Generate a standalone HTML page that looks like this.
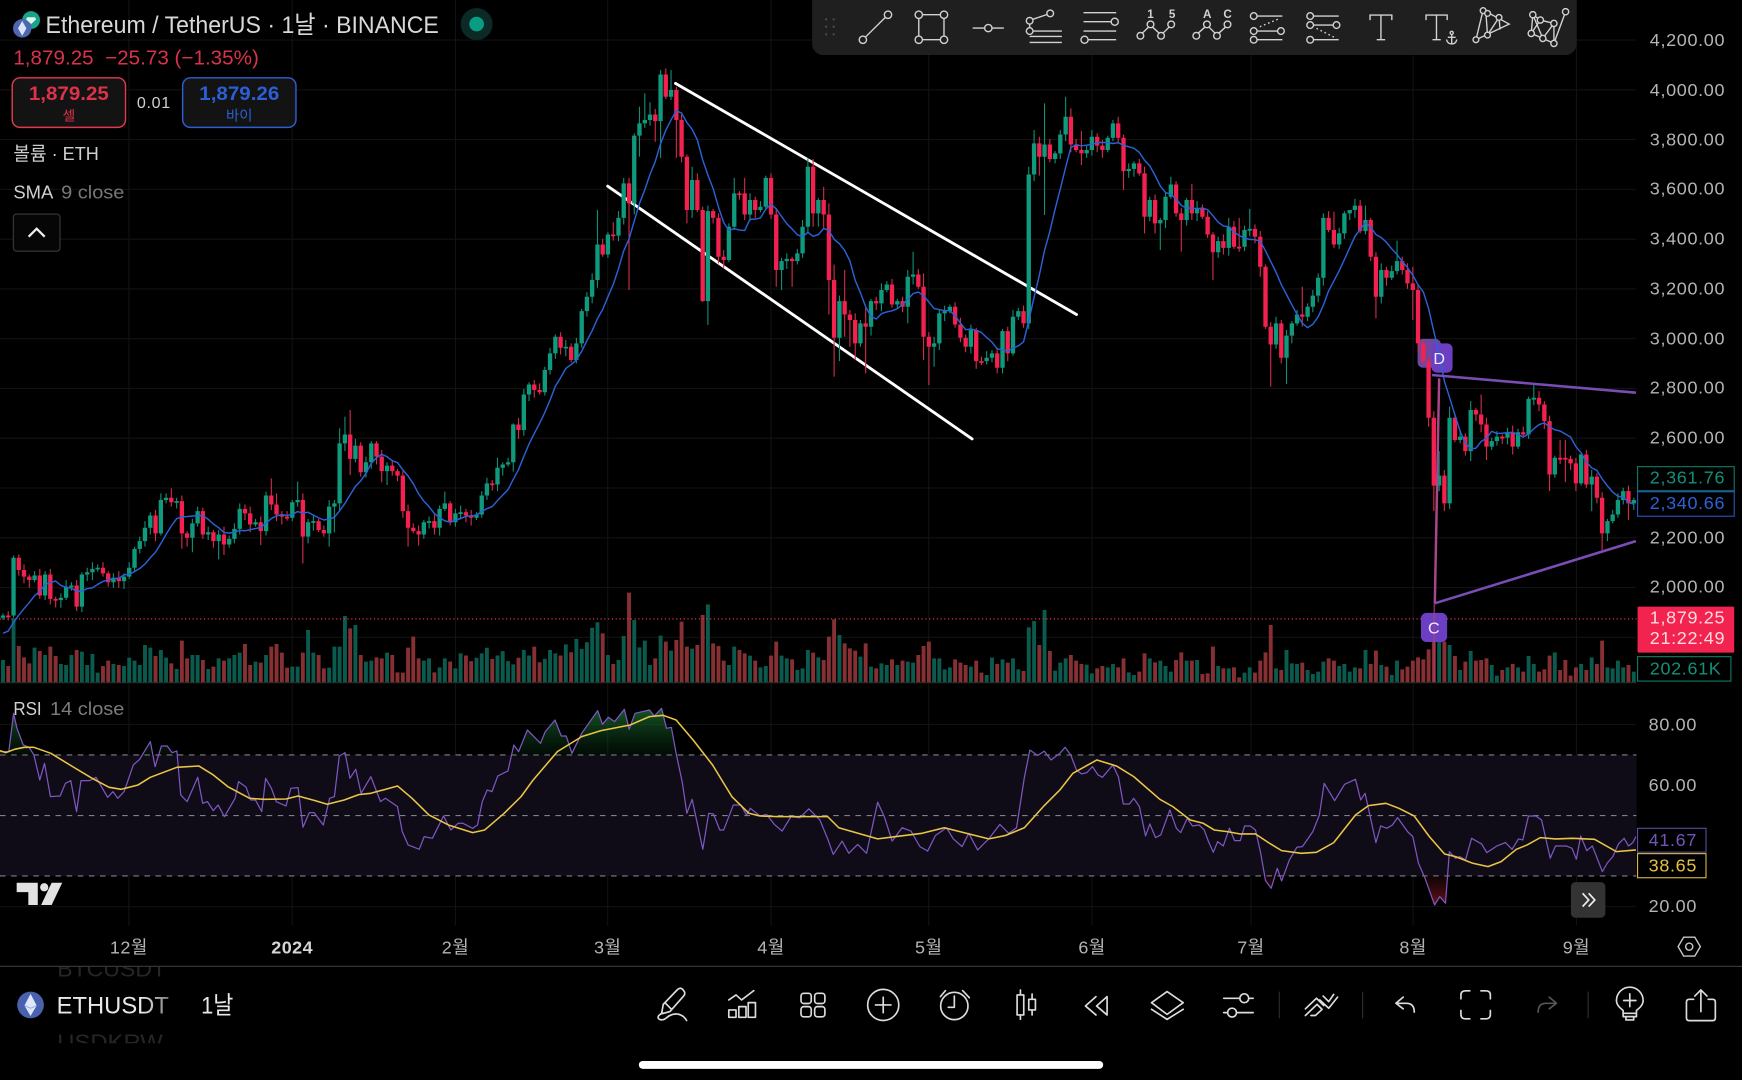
<!DOCTYPE html>
<html lang="ko"><head><meta charset="utf-8"><title>ETHUSDT</title>
<style>
html,body{margin:0;padding:0;background:#000;width:1742px;height:1080px;overflow:hidden}
svg{display:block;font-family:"Liberation Sans","Noto Sans CJK KR",sans-serif}
.ax{font-size:16.2px;fill:#b4b4b4;letter-spacing:.6px}
.xl{font-size:16.2px;fill:#b4b4b4;text-anchor:middle;letter-spacing:.4px}
.i{fill:none;stroke:#d2d2d2;stroke-width:1.25}
.b{fill:none;stroke:#dcdcdc;stroke-width:1.5;stroke-linecap:round;stroke-linejoin:round}
</style></head><body>
<svg xmlns="http://www.w3.org/2000/svg" width="1742" height="1080" viewBox="0 0 1568 972">
<defs>
<linearGradient id="gg" gradientUnits="userSpaceOnUse" x1="0" y1="636" x2="0" y2="680"><stop offset="0" stop-color="#1c7a35" stop-opacity=".75"/><stop offset="1" stop-color="#0b3a17" stop-opacity=".2"/></linearGradient>
<linearGradient id="rg" gradientUnits="userSpaceOnUse" x1="0" y1="788" x2="0" y2="815"><stop offset="0" stop-color="#3a0a10" stop-opacity=".3"/><stop offset="1" stop-color="#8a1a24" stop-opacity=".8"/></linearGradient>
<linearGradient id="ef" gradientUnits="userSpaceOnUse" x1="128" y1="0" x2="153" y2="0"><stop offset="0" stop-color="#e8e8e8"/><stop offset="1" stop-color="#777"/></linearGradient>
<clipPath id="ca"><rect x="0" y="620" width="1473" height="59.5"/></clipPath>
<clipPath id="cb"><rect x="0" y="788.6" width="1473" height="40"/></clipPath>
<clipPath id="cc"><rect x="0" y="870" width="300" height="69"/></clipPath>
</defs>
<rect width="1568" height="972" fill="#000"/>
<g id="grid" stroke="#121212" stroke-width="1"></g>
<rect x="0" y="679.5" width="1473" height="109" fill="#0f0c18"/>
<g id="vol"></g>
<line x1="0" y1="614.4" x2="1473" y2="614.4" stroke="#27302f" stroke-width="1"/>
<line x1="0" y1="557" x2="1473" y2="557" stroke="#f23645" stroke-width="1.1" stroke-dasharray="1 2.4"/>

<!-- channel lines -->
<g stroke="#fff" stroke-width="2.6" stroke-linecap="round">
<line x1="608" y1="75" x2="969" y2="283"/>
<line x1="547" y1="167.5" x2="875" y2="395"/>
</g>
<!-- XABCD boxes -->
<rect x="1276" y="305" width="21" height="26" rx="5" fill="#71469f"/>
<rect x="1288.5" y="309" width="19" height="26.4" rx="5" fill="#6c3fc2"/>
<g id="candles"></g>
<g id="sma"></g>
<g fill="none" stroke="#7a4cb6" stroke-width="2.3">
<line x1="1289" y1="337.5" x2="1472.5" y2="353.4"/>
<line x1="1291.5" y1="543" x2="1472.5" y2="487"/>
</g>
<line x1="1295.4" y1="340.5" x2="1291.5" y2="543" stroke="#a8488a" stroke-width="2.2"/>
<rect x="1279" y="551.6" width="23.6" height="26.2" rx="5" fill="#6b3fc4"/>
<line x1="1291" y1="543" x2="1291" y2="614" stroke="#b2416e" stroke-width="1.4" opacity=".7"/>
<text x="1295.4" y="327.5" font-size="14.5" fill="#f0eaff" text-anchor="middle">D</text>
<text x="1290.6" y="570" font-size="14.5" fill="#f0eaff" text-anchor="middle">C</text>

<!-- RSI -->
<g stroke="#808088" stroke-width="1" stroke-dasharray="5 5">
<line x1="0" y1="679.5" x2="1473" y2="679.5"/><line x1="0" y1="734" x2="1473" y2="734"/><line x1="0" y1="788.4" x2="1473" y2="788.4"/>
</g>
<path id="fa" fill="url(#gg)" clip-path="url(#ca)"/>
<path id="fb" fill="url(#rg)" clip-path="url(#cb)"/>
<path id="rsi" fill="none" stroke="#7e57c2" stroke-width="1.1" stroke-linejoin="round"/>
<path id="ma" fill="none" stroke="#eac545" stroke-width="1.4" stroke-linejoin="round"/>

<!-- header -->
<circle cx="28" cy="18" r="8" fill="#18a38b"/><path d="M24.5 15.5h7l1 2-4.5 4-4.500-4z" fill="#dff5ef"/>
<circle cx="20" cy="25.500" r="8.300" fill="#4f66b0"/><path d="M20 18.800l3.800 6.700-3.800 6.600-3.800-6.600z" fill="#dbe4fb"/>
<text x="41" y="29.500" font-size="22" fill="#d8d8d8" textLength="354" lengthAdjust="spacingAndGlyphs">Ethereum / TetherUS · 1날 · BINANCE</text>
<circle cx="429" cy="21.600" r="14.400" fill="#0b2a25"/><circle cx="429" cy="21.600" r="6.600" fill="#089d82"/>
<text x="12" y="58" font-size="18.500" fill="#d8334a" textLength="221" lengthAdjust="spacingAndGlyphs" xml:space="preserve">1,879.25  −25.73 (−1.35%)</text>
<rect x="11" y="70" width="102" height="44.600" rx="7" fill="#131313" stroke="#df3a4d" stroke-width="1.300"/>
<text x="62" y="90" font-size="17.500" font-weight="bold" fill="#dc3349" text-anchor="middle" textLength="72" lengthAdjust="spacingAndGlyphs">1,879.25</text>
<text x="62" y="108.600" font-size="12.500" fill="#dc3349" text-anchor="middle">셀</text>
<text x="138.500" y="97" font-size="14.500" fill="#cfcfcf" text-anchor="middle" letter-spacing=".6">0.01</text>
<rect x="164.400" y="70" width="102" height="44.600" rx="7" fill="#131313" stroke="#2d5fd0" stroke-width="1.300"/>
<text x="215.400" y="90" font-size="17.500" font-weight="bold" fill="#2b5fd6" text-anchor="middle" textLength="72" lengthAdjust="spacingAndGlyphs">1,879.26</text>
<text x="215.400" y="108.600" font-size="13" fill="#2b5fd6" text-anchor="middle">바이</text>
<text x="12" y="144" font-size="17" fill="#d0d0d0" textLength="77" lengthAdjust="spacingAndGlyphs">볼륨 · ETH</text>
<text x="12" y="178.500" font-size="17" fill="#d0d0d0" textLength="36" lengthAdjust="spacingAndGlyphs">SMA</text>
<text x="55" y="178.500" font-size="17" fill="#787878" textLength="57" lengthAdjust="spacingAndGlyphs">9 close</text>
<rect x="12" y="192.600" width="42" height="33.400" rx="3" fill="#060606" stroke="#3a3a3a" stroke-width="1"/>
<path d="M25.800 213L33 205.800 40.200 213" fill="none" stroke="#eee" stroke-width="2"/>

<!-- top toolbar -->
<rect x="731" y="-10" width="688" height="59.500" rx="10" fill="#1f1f1f"/>
<g fill="#474747"><circle cx="743.600" cy="17.400" r="1.100"/><circle cx="750.400" cy="17.400" r="1.100"/><circle cx="743.600" cy="24" r="1.100"/><circle cx="750.400" cy="24" r="1.100"/><circle cx="743.600" cy="30.900" r="1.100"/><circle cx="750.400" cy="30.900" r="1.100"/></g>
<g class="i">
<circle cx="776.700" cy="35.700" r="3.300"/><circle cx="799.300" cy="13.200" r="3.300"/><path d="M779 33.300L797 15.500"/>
<circle cx="827" cy="13.200" r="3.300"/><circle cx="849.700" cy="13.200" r="3.300"/><circle cx="827" cy="35.700" r="3.300"/><circle cx="849.700" cy="35.700" r="3.300"/><path d="M830.300 13.200H846.400M830.300 35.700H846.400M827 16.500V32.400M849.700 16.500V32.400"/>
<circle cx="889.600" cy="25.200" r="3.300"/><path d="M875.500 25.200H886.300M892.900 25.200H903.600"/>
<circle cx="926.800" cy="18.600" r="3"/><circle cx="945.300" cy="12" r="3"/><circle cx="926.800" cy="27.900" r="3"/><path d="M929.600 17.300L942.500 13M926.800 21.600V24.900M929.800 27.900H955.800M926.800 32.700H955.800M926.800 38.100H955.800"/>
<path d="M975.300 11.400H1004.700M975.300 19.500H1000.100M975.300 27.900H1004.700M979.500 35.700H1004.700"/><circle cx="1003.400" cy="19.500" r="3.200"/><circle cx="976.200" cy="35.700" r="3.200"/>
<circle cx="1026.500" cy="32.100" r="3"/><circle cx="1035.600" cy="21.900" r="3"/><circle cx="1045.100" cy="32.100" r="3"/><circle cx="1054.200" cy="21.900" r="3"/><path d="M1028.300 29.700L1033.800 24.300M1037.400 24.300L1043.300 29.700M1046.900 29.700L1052.400 24.300"/>
<circle cx="1076.800" cy="32.100" r="3"/><circle cx="1086.400" cy="21.900" r="3"/><circle cx="1095.400" cy="32.100" r="3"/><circle cx="1104.900" cy="21.900" r="3"/><path d="M1078.600 29.700L1084.600 24.300M1088.200 24.300L1093.600 29.700M1097.200 29.700L1103.100 24.300"/>
<circle cx="1128.500" cy="14.400" r="3"/><circle cx="1128.500" cy="27.900" r="3"/><circle cx="1128.500" cy="35.700" r="3"/><circle cx="1153" cy="27.900" r="3"/><path d="M1131.500 14.400H1154.300M1131.500 27.900H1150M1131.500 35.700H1154.300"/><path d="M1134 24L1152 16.500" stroke-dasharray="1.500 2.500"/>
<circle cx="1179.300" cy="14.400" r="3"/><circle cx="1179.300" cy="22.500" r="3"/><circle cx="1179.300" cy="35.700" r="3"/><circle cx="1203" cy="22.500" r="3"/><path d="M1182.300 14.400H1205M1182.300 22.500H1200M1182.300 35.700H1205"/><path d="M1185 25.500L1203 34.500" stroke-dasharray="1.500 2.500"/>
<path d="M1233.200 18V13.500H1252.800V18M1243 13.500V35.700M1239.200 35.700H1246.800"/>
<path d="M1283.600 18V13.500H1302.600V18M1293 13.500V35.700M1289.400 35.700H1296.800"/><circle cx="1306.700" cy="29.500" r="1.400"/><path d="M1306.700 31V39.500M1303.200 33.500H1310.200M1302 35.500Q1303 39.500 1306.700 39.500Q1310.500 39.500 1311.300 35.500"/>
<path d="M1328.500 35.700L1335 9L1358.400 21.600ZM1337.500 11.400L1338.900 31.500M1349.300 15.600L1338.900 31.500M1349.300 15.600L1350.200 26.500"/><g fill="#1f1f1f"><circle cx="1328.500" cy="35.700" r="2.600"/><circle cx="1335" cy="9.500" r="2.600"/><circle cx="1339" cy="12" r="2.600"/><circle cx="1349.300" cy="15.600" r="2.600"/><circle cx="1338.900" cy="31.500" r="2.600"/></g>
<path d="M1379.700 13.200L1378.300 30L1388.700 34.500L1398.700 39L1409.200 10.500M1379.700 13.200L1386.500 18L1398.700 21L1388.700 34.500M1386.500 18L1378.300 30M1398.700 21L1398.700 39M1379.700 13.200L1388.700 34.500"/><g fill="#1f1f1f"><circle cx="1379.700" cy="13.200" r="2.800"/><circle cx="1386.500" cy="18" r="2.800"/><circle cx="1398.700" cy="21" r="2.800"/><circle cx="1409.200" cy="10.500" r="2.800"/><circle cx="1378.300" cy="30" r="2.800"/><circle cx="1388.700" cy="34.500" r="2.800"/><circle cx="1398.700" cy="39" r="2.800"/></g>
</g>
<g font-size="10.500" fill="#d2d2d2" text-anchor="middle" font-weight="bold"><text x="1035.600" y="16">1</text><text x="1055" y="16">5</text><text x="1086.600" y="16">A</text><text x="1105" y="16">C</text></g>

<!-- price axis -->
<g class="ax" id="pa">
<text x="1485" y="41.200">4,200.00</text><text x="1485" y="86.200">4,000.00</text><text x="1485" y="130.700">3,800.00</text><text x="1485" y="175.200">3,600.00</text><text x="1485" y="220.200">3,400.00</text><text x="1485" y="265.200">3,200.00</text><text x="1485" y="310.200">3,000.00</text><text x="1485" y="354.200">2,800.00</text><text x="1485" y="399.200">2,600.00</text><text x="1485" y="489.200">2,200.00</text><text x="1485" y="533.200">2,000.00</text>
<text x="1484" y="657.500">80.00</text><text x="1484" y="712">60.00</text><text x="1484" y="821">20.00</text>
</g>
<rect x="1474" y="420" width="87" height="21.700" fill="#000" stroke="#0e7c69" stroke-width="1"/>
<text class="ax" x="1485" y="435.200" style="fill:#12907a">2,361.76</text>
<rect x="1474" y="442.600" width="87" height="22" fill="#000" stroke="#2456c0" stroke-width="1"/>
<text class="ax" x="1485" y="458.200" style="fill:#2a62d8">2,340.66</text>
<rect x="1474" y="546" width="87" height="41.400" rx="1" fill="#f2234f"/>
<text class="ax" x="1485" y="561" style="fill:#ffdbe0">1,879.25</text>
<text class="ax" x="1485" y="579.600" style="fill:#ffdbe0">21:22:49</text>
<rect x="1474" y="591" width="84" height="22" fill="#000" stroke="#0e7c69" stroke-width="1"/>
<text class="ax" x="1485" y="607.200" style="fill:#12907a">202.61K</text>
<rect x="1474" y="745.500" width="61.600" height="21.500" fill="#000" stroke="#5b4a9e" stroke-width="1"/>
<text class="ax" x="1484" y="761.600" style="fill:#6f56b8">41.67</text>
<rect x="1474" y="768.300" width="61.600" height="21.700" fill="#000" stroke="#d9b840" stroke-width="1"/>
<text class="ax" x="1484" y="784.600" style="fill:#e6c340">38.65</text>

<!-- labels in panes -->
<text x="12" y="643.500" font-size="16.500" fill="#d0d0d0" textLength="25.500" lengthAdjust="spacingAndGlyphs">RSI</text>
<text x="45" y="643.500" font-size="16.500" fill="#7c7c7c" textLength="67" lengthAdjust="spacingAndGlyphs">14 close</text>
<!-- TV logo -->
<g fill="#e2e2e2"><path d="M15 794.500H34V814.500H25.500V803H15Z"/><circle cx="39.800" cy="798.600" r="3.700"/><path d="M46.500 794.500H56L46.500 814.500H37Z"/></g>
<!-- scroll btn -->
<rect x="1414" y="794" width="31" height="32" rx="4" fill="#333"/>
<path d="M1424.500 804L1430 810L1424.500 816M1430 804L1435.500 810L1430 816" fill="none" stroke="#f0f0f0" stroke-width="1.500"/>
<!-- time axis -->
<g class="xl">
<text x="116" y="858">12월</text><text x="263" y="858" style="font-weight:bold;fill:#d6d6d6">2024</text><text x="410" y="858">2월</text><text x="547" y="858">3월</text><text x="694" y="858">4월</text><text x="836" y="858">5월</text><text x="983" y="858">6월</text><text x="1126" y="858">7월</text><text x="1272" y="858">8월</text><text x="1419" y="858">9월</text>
</g>
<path d="M1515.500 843.500H1525.500L1530.500 852L1525.500 860.500H1515.500L1510.500 852Z" fill="none" stroke="#c6c6c6" stroke-width="1.300"/><circle cx="1520.500" cy="852" r="3.200" fill="none" stroke="#c6c6c6" stroke-width="1.300"/>
<line x1="0" y1="869.700" x2="1568" y2="869.700" stroke="#3c3c3c" stroke-width="1"/>

<!-- bottom bar -->
<g clip-path="url(#cc)" font-size="20" fill="#262626"><text x="51.500" y="879" textLength="98" lengthAdjust="spacingAndGlyphs">BTCUSDT</text><text x="51.500" y="945" textLength="95" lengthAdjust="spacingAndGlyphs">USDKRW</text></g>
<circle cx="27.500" cy="904.500" r="12" fill="#4a62ae"/><path d="M27.500 894.500L33 905L27.500 914.500L22 905Z" fill="#dfe7fb"/><path d="M22 905L27.500 907.500L33 905" fill="none" stroke="#8fa3e2" stroke-width=".8"/>
<text x="51" y="912.200" font-size="22" fill="url(#ef)" textLength="101" lengthAdjust="spacingAndGlyphs">ETHUSDT</text>
<text x="181" y="912.200" font-size="22" fill="#e8e8e8" textLength="29" lengthAdjust="spacingAndGlyphs">1날</text>

<g class="b">
<path d="M597 904L610 890.500Q612.500 888.500 614.500 890.500L616 892.500Q617 894.500 615.300 896.500L603 910.500L595.500 912.500ZM598.500 902.500L604.500 908.500"/><path d="M618 918.500C614 911.500 606 911 600 916C596 919.500 590.500 917.500 593 914L596 911.500"/>
<path d="M656 909H662.500V915.600H656ZM665 906H671.500V915.600H665ZM673.500 902.400H680V915.600H673.500ZM656 900L662.500 895.500L667.500 900L678.500 891.600"/>
<rect x="721" y="894" width="9.200" height="9.200" rx="2.500"/><rect x="733.300" y="894" width="9.200" height="9.200" rx="2.500"/><rect x="721" y="906" width="9.200" height="9.200" rx="2.500"/><rect x="733.300" y="906" width="9.200" height="9.200" rx="2.500"/>
<circle cx="795" cy="904.500" r="14"/><path d="M795 897.500V911.500M788 904.500H802"/>
<circle cx="859" cy="905.400" r="12.300"/><path d="M846.500 897L851 891.600M866.500 891.600L872.500 898M859 896.500V906.600H853.500"/>
<path d="M915.500 895.500H921.500V913.500H915.500ZM918.500 891V895.500M918.500 913.500V917.400M926 899.400H932V909H926ZM929 894.600V899.400M929 909V913.500"/>
<path d="M986.500 897L977 905.400L986.500 913.500M996.500 897L987 905.400L996.500 913.500Z"/>
<path d="M1050.500 892.500L1065 902.500L1050.500 913L1036.500 902.500ZM1036.500 908.400L1050.500 917.500L1065 908.400"/>
<path d="M1101.500 898.500H1116M1124 898.500H1128M1101.500 911.400H1105M1113 911.400H1128"/><circle cx="1120" cy="898.500" r="4"/><circle cx="1109" cy="911.400" r="4"/>
<path d="M1175 908L1185 898.500L1191.500 905M1175 914L1185.500 904L1190 908.500L1184 914L1180 914M1188 900L1196 907.500L1204 897.500M1191 896.500L1196 901.500L1200.500 895"/>
<path d="M1256.500 903L1263 897.500M1256.500 903L1263 908M1256.500 903H1266Q1273 903 1273 911"/>
<path d="M1315 899V895.600Q1315 891.800 1319 891.800H1323M1333 891.800H1337.500Q1341.500 891.800 1341.500 895.600V899M1341.500 909.500V913Q1341.500 917 1337.500 917H1333M1323 917H1319Q1315 917 1315 913V909.500"/>
<path d="M1401 903L1394.500 897.500M1401 903L1394.500 908M1401 903H1391.500Q1384.500 903 1384.500 911" stroke="#565656"/>
<path d="M1461 912V909.500C1458 907 1455 904.500 1455 900.500A12 12 0 0 1 1479 900.500C1479 904.500 1476 907 1473 909.500V912ZM1461 912H1473V915H1461ZM1463.500 915H1470.500V918H1463.500ZM1467 894.500V906M1461.500 900.500H1472.500"/>
<path d="M1524.500 899.400H1520.500Q1518 899.400 1518 902V916Q1518 918.600 1520.500 918.600H1541.500Q1544 918.600 1544 916V902Q1544 899.400 1541.500 899.400H1537.500M1531 891V910.500M1525.500 896.500L1531 891L1536.500 896.500"/>
</g>
<path d="M1151.500 892.500V916.500M1226.500 892.500V916.500M1429.500 892.500V916.500" stroke="#2e2e2e" stroke-width="1" fill="none"/>
<rect x="575" y="955" width="418" height="7" rx="3.500" fill="#fff"/>
</svg>
<script>
(function(){
var $=function(i){return document.getElementById(i)};
var gr='',y,k,M=[116,263,410,547,694,836,983,1126,1272,1419];
for(k=0;k<13;k++){y=36+44.8*k;gr+='M0 '+y+'H1473';}
M.forEach(function(x){gr+='M'+x+' 0V833'});
[652,706.5,761,816].forEach(function(y){gr+='M0 '+y+'H1473'});
var gp=document.createElementNS('http://www.w3.org/2000/svg','path');gp.setAttribute('d',gr);gp.setAttribute('fill','none');$('grid').appendChild(gp);
var C=[554,554,502,513,519,522,518,536,517,539,540,538,528,527,546,517,515,512,511,516,524,520,523,519,511,
494,487,475,464,480,450,448,452,451,480,484,471,460,481,479,487,481,490,485,476,458,462,472,470,478,446,454,463,465,466,452,450,483,470,469,477,480,456,453,399,391,413,401,425,416,399,411,424,419,424,428,460,475,478,481,470,469,475,458,453,470,462,461,464,466,463,446,435,436,421,418,416,382,387,355,
346,351,353,333,318,303,313,312,324,309,280,267,252,220,229,211,212,196,165,183,122,111,108,103,109,67,87,81,108,141,189,162,189,271,190,196,231,234,204,174,174,193,180,189,186,160,193,243,235,233,235,228,204,150,192,180,193,252,304,271,283,288,309,291,294,271,273,261,256,274,271,276,249,247,258,303,312,309,282,280,276,292,304,312,297,325,325,322,318,331,298,318,285,280,291,157,129,141,130,
143,138,121,105,130,135,138,135,123,131,135,124,111,124,154,152,147,156,195,180,201,198,177,166,192,198,180,192,187,195,211,227,217,223,204,222,222,207,206,213,240,294,310,291,322,302,291,283,285,276,266,250,196,207,220,210,192,189,185,208,198,231,267,243,250,244,235,243,255,261,309,325,376,437,428,453,376,396,393,406,369,373,382,402,397,393,394,389,402,389,391,359,358,364,379,427,412,412,413,417,435,409,436,429,448,480,469,463,450,442,453,450];
var H={2:500,64:385.5,65:375,66:369,57:444,56:433.5,51:430.5,52:444,30:444,32:439.5,37:456,42:474,45:453,50:442.500,92:430,94:412,97:381,98:376,84:442.5,71:397,78:471,
121:96,122:84,123:92,125:63,126:61.5,127:63,113:189,116:200,153:142.5,154:143,156:168,157:183,158:238,160:243,164:277,173:226.5,175:246,195:150,196:117,198:93,202:87,203:97.5,222:159,226:165.6,250:246,253:190.5,258:180,259:185,265:216.6,247:258,273:406,275:366,279:361,281:355,291:346,296:396,297:396,131:150,139:160,141:160,145:158,118:160,
205:118,211:108,233:196,235:196,238:202,237:188,255:190,256:190,268:240};
var L={2:556,34:494,35:492,36:497,41:503.4,42:499.5,49:490.5,57:507,62:492,63:479,66:427.5,72:434,73:436.5,77:492,79:491,97:424.5,98:395,99:392,
119:261,120:193,121:141,124:127.5,125:142,128:142,130:201,133:271.5,134:292.5,147:258,148:261,150:258,154:204,155:204,156:205,157:283,158:339,159:325,160:303,161:312,162:324,164:336,165:302,172:291,175:324,176:346.5,177:330,189:336,190:336,197:158,198:193.5,
205:148.5,213:171,217:210,219:210,220:225,224:226.5,230:252,239:249,241:348,244:345.6,247:294,261:286.5,268:288,271:384,274:460,272:460,275:458,302:460,304:495,309:468,294:442,297:434,279:415,282:414};
var VA=[360,378,235,318,352,370,323,333,345,320,348,372,375,345,330,335,375,342,398,378,362,372,375,378,353,362,375,315,323,348,330,353,370,387,302,355,345,345,360,387,380,355,362,355,345,338,312,375,365,368,345,320,312,338,383,380,380,338,270,338,345,385,383,320,320,228,265,255,345,365,362,352,355,338,345,397,398,323,290,355,362,355,397,382,355,365,385,340];
var VB=[590,595,592,588,583,593,590,586,595,598,592,585,590,582,596,593,585,588,590,580,587,575,584,578,565,560];
var VC=[130,195,222,210,138,8,90,172,152,225,205,137,155,182,150,95,170,176,165,75,43,160,168,212,225,170,180,190,197,212,232,228,197,155,197,205,208,240,235,180,188,202,210,140,88,135,160,175,182,200,160,230,235,220,225,208,225,212,215,218,195,168,155,205,205,238,232,208,218,225,230,212,248,255,203,222,208,218,205,238,243,112,93,165,60,183,242,218,205,195,212,222,224,250,235,228,232,222,232,205,247,255,245,190,205,217,212,228,245,210,187,212,212,210,252,250,170,228,235,235,232,262,248,232,248,212,187,105,235,240,180,220,222,218,240,252,245,215,205,212,228,222,245,232,235,180,222,182,225,230,255,212,238,230,212,202,208,178,100,152,155,165,198,240,215,183,212,210,205,225,257,240,232,222,232,245,198,222,245,238,197,187,240,210,257,232,222,240,202,222,152,232,235,212,232,225,245];
var gw='',gb='',rw='',rb='',gv='',rv='',X=function(i){return 2.7+4.735*i};
function P(g,d,st,w){var p=document.createElementNS('http://www.w3.org/2000/svg','path');p.setAttribute('d',d);p.setAttribute('stroke',st);p.setAttribute('stroke-width',w);p.setAttribute('fill','none');p.setAttribute('stroke-linejoin','round');$(g).appendChild(p);}
for(var i=0;i<C.length;i++){
 var x=X(i).toFixed(1),c=C[i],o=i?C[i-1]:556,t=Math.min(c,o),b=Math.max(c,o),up=c<o;
 if(b-t<1.6){b=t+1.6}
 var hi=H[i]||t-(2+i*7%5),lo=L[i]||b+(2+i*13%6);
 if(hi>t)hi=t;if(lo<b)lo=b;
 var w='M'+x+' '+hi+'V'+lo,bd='M'+x+' '+t+'V'+b;
 if(up){gw+=w;gb+=bd}else{rw+=w;rb+=bd}
 var v=i<88?486+VA[i]*.3:i<114?VB[i-88]:(VC[i-114]!==undefined?531+VC[i-114]*.3:590);
 var vs='M'+x+' 614V'+v.toFixed(1);
 if(up)gv+=vs;else rv+=vs;
}
P('vol',gv,'#0b5a4e',3.5);P('vol',rv,'#863034',3.5);
P('candles',gw,'#0f8f76',1);P('candles',rw,'#d42c4c',1);P('candles',gb,'#0f9a7e',3.9);P('candles',rb,'#f2214f',3.9);
var s='';
for(i=0;i<C.length;i++){var sum=0;for(k=i-8;k<=i;k++)sum+=k<0?572:C[k];s+=(i?'L':'M')+X(i).toFixed(1)+' '+(sum/9).toFixed(1);}
P('sma',s,'#2a62d6',1.3);
function a(z,sx,ox,out){for(var j=0;j<z.length;j+=2)out.push([ox+z[j]*sx,621+z[j+1]*.3]);return out}
var R=[];
a([0,185,18,185,28,70,35,115,48,165,60,172,70,195,82,270,92,220,104,320,124,318,135,280,146,272,158,365,167,272,185,272,198,262,222,322,233,305,243,325,256,305,275,225,288,208,310,155,320,230,333,168,345,168,355,188,365,183,373,315,386,335,408,262,418,340,428,335,440,362,450,345,463,380,485,325,492,275,508,292,517,330,527,330,540,365,548,265,560,295,570,335,590,348,600,295,615,293,625,412,638,368,648,368,667,405,680,325,690,320,700,198,712,188,722,265,734,238,745,310,765,260,785,335,795,325,820,350,830,425,842,465,865,478,875,440,892,445,915,378,930,420,945,400,955,400,975,415,985,405,995,335,1005,300,1015,305,1027,258,1048,243,1060,165,1070,185,1088,120,1115,160,1125,125,1145,90,1158,138,1168,138,1180,190,1200,130,1233,62,1243,103,1255,82,1268,95,1288,58,1298,118,1310,70,1340,60,1350,78,1365,55,1375,115,1385,112,1395,190,1408,280,1417,370,1428,328,1450,478,1462,370,1472,372,1485,420,1493,420,1513,345,1528,345,1540,375,1548,355,1568,378],.4363,0,R);
[[690,733],[697,742],[704,748],[712,735],[720,736],[728,728],[738,738],[745,755],[750,769],[758,757],[764,768],[772,760],[780,768],[790,722],[796,735],[803,757],[812,745],[820,748],[828,762],[835,766],[842,752],[852,745],[858,755],[866,762],[872,750],[880,765],[890,755],[900,742],[908,750],[915,745],[922,700],[927,675],[934,680],[940,676],[946,684]].forEach(function(p){R.push(p)});
a([0,190,12,172,25,195,38,240,50,252,62,248,75,230,88,255,98,262,122,225,135,262,146,342,160,342,170,325,183,350,197,438,207,402,220,443,232,435,253,360,268,415,278,428,293,385,305,408,320,405,332,420,342,455,353,487,363,455,376,468,390,415,402,452,415,452,425,408,438,408,450,420,462,490,473,572,486,595,500,535,510,573,528,510,545,472,558,470,582,425,597,375,608,280,632,332,655,283,680,268,692,330,702,310,727,458,738,408,752,415,765,405,777,383,800,425,812,440,825,520,840,565,862,645,874,620,887,640,896,485,910,505,920,500,933,510,947,445,970,462,982,488,1005,468,1025,458,1040,478,1055,447,1065,450,1078,378,1095,378,1108,390,1128,505,1140,468,1165,468,1178,475,1188,508,1198,438,1212,482,1225,468,1248,545,1260,518,1272,500,1285,462,1298,445,1308,468,1318,458,1325,440],.3913,954,R);
var Y=[];
a([0,182,12,188,30,178,50,172,70,172,105,190,150,230,190,265,225,292,250,298,285,285,310,262,365,232,410,228,440,255,470,290,515,325,545,328,590,327,615,318,650,332,675,343,710,330,740,314,765,310,820,288,850,325,885,375,925,405,975,428,1000,420,1040,370,1075,320,1100,270,1150,185,1200,140,1240,122,1300,105,1340,80,1368,76,1395,90,1430,150,1470,225,1510,320,1545,370,1568,378],.4363,0,Y);
[[700,735],[745,735],[755,745],[790,755],[830,750],[850,745],[890,755],[905,752],[922,745],[940,725]].forEach(function(p){Y.push(p)});
a([0,300,30,250,85,210,130,228,170,260,230,328,260,350,300,390,330,400,355,420,385,425,415,432,450,432,480,458,510,482,555,490,590,487,630,458,680,375,710,347,750,340,780,355,815,378,850,440,885,492,910,500,950,520,985,530,1015,515,1050,478,1075,465,1105,443,1140,447,1180,445,1230,448,1280,485,1325,480],.3913,954,Y);
function d(Q){return Q.map(function(p,j){return (j?'L':'M')+p[0].toFixed(1)+' '+p[1].toFixed(1)}).join('')}
var rd=d(R);
$('rsi').setAttribute('d',rd);$('ma').setAttribute('d',d(Y));
var last=R[R.length-1];
$('fa').setAttribute('d',rd+'L'+last[0].toFixed(1)+' 679.5L0 679.5Z');
$('fb').setAttribute('d',rd+'L'+last[0].toFixed(1)+' 788.4L0 788.4Z');
})();
</script>
</body></html>
